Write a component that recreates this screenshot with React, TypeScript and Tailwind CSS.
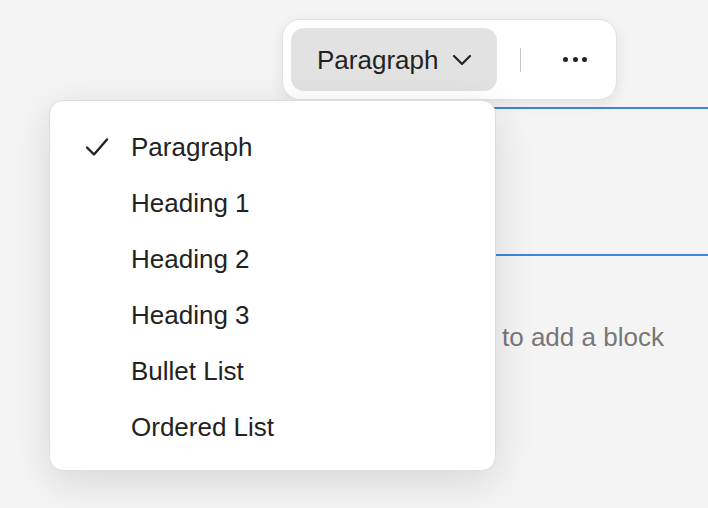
import { useState } from 'react'

const BLOCK_TYPES = ['Paragraph', 'Heading 1', 'Heading 2', 'Heading 3', 'Bullet List', 'Ordered List']

function CheckIcon() {
  return (
    <svg width="24" height="20" viewBox="0 0 24 20" fill="none" stroke="#222" strokeWidth="2.4" strokeLinecap="round" strokeLinejoin="round">
      <path d="M2 10.5l7 7L22 2.5" />
    </svg>
  )
}

function ChevronDown() {
  return (
    <svg width="20" height="12" viewBox="0 0 20 12" fill="none" stroke="#222" strokeWidth="2.2" strokeLinecap="round" strokeLinejoin="round">
      <path d="M2 2l8 8 8-8" />
    </svg>
  )
}

export default function App() {
  const [selected, setSelected] = useState('Paragraph')

  return (
    <div className="relative w-[708px] h-[508px] overflow-hidden bg-[#f4f4f4] font-['Liberation_Sans',Arial,sans-serif] text-[#222]">
      {/* Editor body */}
      <div className="pt-[107px] pl-[120px]">
        <div className="h-[149px] border-y-2 border-[#3d86e0]" />
        <p className="mt-[66px] pl-[382px] text-[26px] leading-[30px] text-[#777] whitespace-nowrap">to add a block</p>
      </div>

      {/* Floating toolbar */}
      <div className="absolute left-[282px] top-[19px] w-[335px] h-[81px] flex items-center pl-[8px] bg-white border border-[#e2e2e2] rounded-[18px] shadow-[0_4px_14px_rgba(0,0,0,0.08)]">
        <button className="h-[63px] w-[206px] flex items-center gap-[14px] pl-[26px] rounded-[13px] bg-[#e2e2e2] text-[26px] leading-none">
          {selected}
          <ChevronDown />
        </button>
        <div className="ml-[23px] w-px h-[24px] bg-[#c8c8c8]" />
        <button className="ml-[42px] flex items-center gap-[4.5px]">
          <span className="w-[5px] h-[5px] rounded-full bg-[#222]" />
          <span className="w-[5px] h-[5px] rounded-full bg-[#222]" />
          <span className="w-[5px] h-[5px] rounded-full bg-[#222]" />
        </button>
      </div>

      {/* Block type menu */}
      <div className="absolute left-[49px] top-[100px] w-[447px] h-[371px] pt-[18px] bg-white border border-[#dedede] rounded-[14px] shadow-[0_10px_40px_rgba(0,0,0,0.12)]">
        {BLOCK_TYPES.map((t) => (
          <div
            key={t}
            onClick={() => setSelected(t)}
            className="h-[56px] flex items-center cursor-pointer text-[26px] leading-none"
          >
            <span className="w-[81px] pl-[35px] flex items-center">{selected === t && <CheckIcon />}</span>
            {t}
          </div>
        ))}
      </div>
    </div>
  )
}
